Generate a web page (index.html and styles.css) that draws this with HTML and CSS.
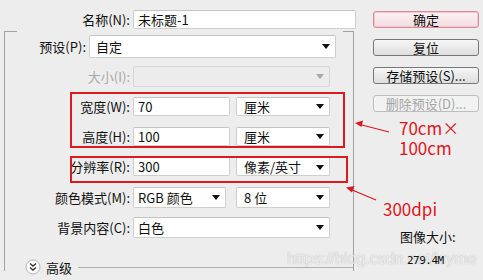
FILE: index.html
```html
<!DOCTYPE html>
<html lang="zh">
<head>
<meta charset="utf-8">
<link rel="stylesheet" href="styles.css">
</head>
<body>
<div class="dialog">
  <div class="watermark">https://blog.csdn.net/lcyme</div>
  <div class="form">
    <div class="row">
      <span class="label">名称(N):</span>
      <div class="field input name-field">未标题-1</div>
    </div>
    <div class="group">
      <div class="row preset-row">
        <span class="label label-preset">预设(P):</span>
        <div class="field select preset-field">自定</div>
      </div>
      <div class="row">
        <span class="label in-group disabled-text">大小(I):</span>
        <div class="field select disabled size-field"></div>
      </div>
      <div class="row">
        <span class="label in-group">宽度(W):</span>
        <div class="field input num-field">70</div>
        <div class="field select unit-field">厘米</div>
      </div>
      <div class="row">
        <span class="label in-group">高度(H):</span>
        <div class="field input num-field">100</div>
        <div class="field select unit-field">厘米</div>
      </div>
      <div class="row row-res">
        <span class="label in-group">分辨率(R):</span>
        <div class="field input num-field">300</div>
        <div class="field select unit-field">像素/英寸</div>
      </div>
      <div class="row">
        <span class="label in-group">颜色模式(M):</span>
        <div class="field select tall mode-field">RGB 颜色</div>
        <div class="field select tall bits-field">8 位</div>
      </div>
      <div class="row">
        <span class="label in-group">背景内容(C):</span>
        <div class="field select tall size-field">白色</div>
      </div>
      <div class="advanced">
        <svg class="adv-icon" width="16" height="16" viewBox="0 0 16 16">
          <circle cx="8" cy="8" r="7" fill="#fdfdfd" stroke="#b4b4b4"/>
          <polyline points="5,4.5 8,7 11,4.5" fill="none" stroke="#333" stroke-width="1.4"/>
          <polyline points="5,8.5 8,11 11,8.5" fill="none" stroke="#333" stroke-width="1.4"/>
        </svg>
        <span class="adv-label">高级</span>
        <span class="adv-line"></span>
      </div>
    </div>
  </div>
  <div class="side">
    <div class="btn btn-default">确定</div>
    <div class="btn">复位</div>
    <div class="btn">存储预设(S)...</div>
    <div class="btn btn-disabled">删除预设(D)...</div>
    <div class="info">
      <div class="info-title">图像大小:</div>
      <div class="info-value">279.4M</div>
    </div>
  </div>

  <div class="redbox redbox-size"></div>
  <div class="redbox redbox-res"></div>
  <div class="note note-size">70cm×<br>100cm</div>
  <div class="note note-res">300dpi</div>
  <svg class="arrows" width="483" height="280" viewBox="0 0 483 280">
    <line x1="389" y1="132" x2="360" y2="124.5" stroke="#e0141c" stroke-width="1.2"/>
    <polygon points="355,123 363,120.5 361.5,127" fill="#e0141c"/>
    <line x1="376" y1="200" x2="351" y2="189.5" stroke="#e0141c" stroke-width="1.2"/>
    <polygon points="346,187.5 354.5,186 352,192.5" fill="#e0141c"/>
  </svg>
</div>
</body>
</html>
```

FILE: styles.css
```css
* { box-sizing: border-box; }

html, body {
  margin: 0;
  padding: 0;
  background: #ededed;
}

body {
  width: 483px;
  height: 280px;
  overflow: hidden;
  font-family: "Noto Sans CJK SC", "Noto Sans", sans-serif;
  font-size: 13px;
  color: #111;
}

.dialog {
  position: relative;
  display: flex;
  width: 483px;
  height: 280px;
}

.form {
  width: 358px;
  padding-left: 4px;
}

.row {
  display: flex;
  align-items: center;
  height: 30px;
}

.form > .row:first-child {
  margin-top: 4px;
}

.label {
  width: 129px;
  padding-right: 3px;
  text-align: right;
  white-space: nowrap;
  line-height: 1;
}

.label.in-group {
  width: 128px;
}

.label-preset {
  width: 84px;
}

.disabled-text {
  color: #a9a9a9;
}

.field {
  position: relative;
  height: 19px;
  background: #fff;
  border: 1px solid #cfcfcf;
  border-top-color: #c4c4c4;
  border-radius: 2px;
  padding-left: 4px;
  line-height: 17px;
  white-space: nowrap;
}

.field.tall {
  height: 21px;
  line-height: 19px;
}

.select::after {
  content: "";
  position: absolute;
  right: 5px;
  top: 50%;
  margin-top: -2px;
  border-left: 4px solid transparent;
  border-right: 4px solid transparent;
  border-top: 5px solid #111;
}

.name-field {
  width: 223px;
}

.preset-field {
  width: 247px;
  height: 23px;
  line-height: 21px;
  padding-left: 6px;
}

.size-field {
  width: 197px;
}

.disabled {
  height: 21px;
  background: #ececec;
  border-color: #d6d6d6;
}

.disabled::after {
  border-top-color: #a8a8a8;
}

.num-field {
  width: 97px;
}

.unit-field {
  width: 94px;
  margin-left: 6px;
}

.mode-field {
  width: 93px;
}

.bits-field {
  width: 94px;
  margin-left: 10px;
}

.bits-field, .unit-field {
  padding-left: 7px;
}

.group {
  position: relative;
  margin-top: 8px;
  width: 350px;
  height: 240px;
  border-left: 1px solid #a2a2a2;
  border-right: 1px solid #a2a2a2;
}

.group::before,
.group::after {
  content: "";
  position: absolute;
  top: 0;
  height: 1px;
  background: #a2a2a2;
}

.group::before { left: 0; width: 12px; }
.group::after { right: 0; width: 10px; }

.preset-row {
  margin-top: -11px;
}

.row-res {
  height: 31px;
}

.advanced {
  display: flex;
  align-items: center;
  height: 20px;
  margin-top: 15px;
  padding-left: 20px;
}

.adv-icon {
  flex: none;
}

.adv-label {
  margin-left: 5px;
  line-height: 1;
}

.adv-line {
  flex: 1;
  height: 1px;
  margin-left: 6px;
  margin-top: 1px;
  background: #b0b0b0;
}

.side {
  position: relative;
  z-index: 2;
  display: flex;
  flex-direction: column;
  width: 106px;
  margin-left: 15px;
  padding-top: 11px;
}

.btn {
  height: 17px;
  margin-bottom: 11px;
  border: 1px solid #777;
  border-radius: 3px;
  background: linear-gradient(#f6f6f6, #dedede);
  text-align: center;
  line-height: 15px;
  white-space: nowrap;
}

.btn-default {
  border-color: #d98a99;
  background: linear-gradient(#fdf1f3, #f2dde1);
  box-shadow: inset 0 0 0 1px #f6c7d0;
}

.btn-disabled {
  color: #a5a5a5;
  border-color: #bdbdbd;
  background: #f2f2f2;
}

.info {
  margin-top: 107px;
  padding-left: 27px;
}

.info-title {
  line-height: 14px;
}

.info-value {
  margin-top: 11px;
  padding-left: 7px;
  font-family: "DejaVu Sans Mono", monospace;
  font-size: 11px;
  letter-spacing: -0.5px;
  line-height: 12px;
}

.watermark {
  position: absolute;
  z-index: 1;
  left: 287px;
  top: 250px;
  font-family: "Liberation Sans", Arial, sans-serif;
  font-size: 16px;
  color: rgba(255, 255, 255, 0.75);
  text-shadow: 0 0 1px rgba(120, 120, 120, 0.6);
  white-space: nowrap;
  pointer-events: none;
}

.redbox {
  position: absolute;
  z-index: 3;
  border: 2px solid #dc1a1f;
  pointer-events: none;
}

.redbox-size {
  left: 70px;
  top: 92px;
  width: 275px;
  height: 56px;
}

.redbox-res {
  left: 70px;
  top: 156px;
  width: 278px;
  height: 27px;
}

.note {
  position: absolute;
  z-index: 3;
  color: #e0141c;
  font-family: "Noto Sans CJK SC", "Noto Sans", sans-serif;
  font-size: 17px;
  line-height: 20px;
  white-space: nowrap;
}

.note-size {
  left: 399px;
  top: 118px;
}

.note-res {
  left: 383px;
  top: 199px;
}

.arrows {
  position: absolute;
  z-index: 3;
  left: 0;
  top: 0;
  pointer-events: none;
}
```
